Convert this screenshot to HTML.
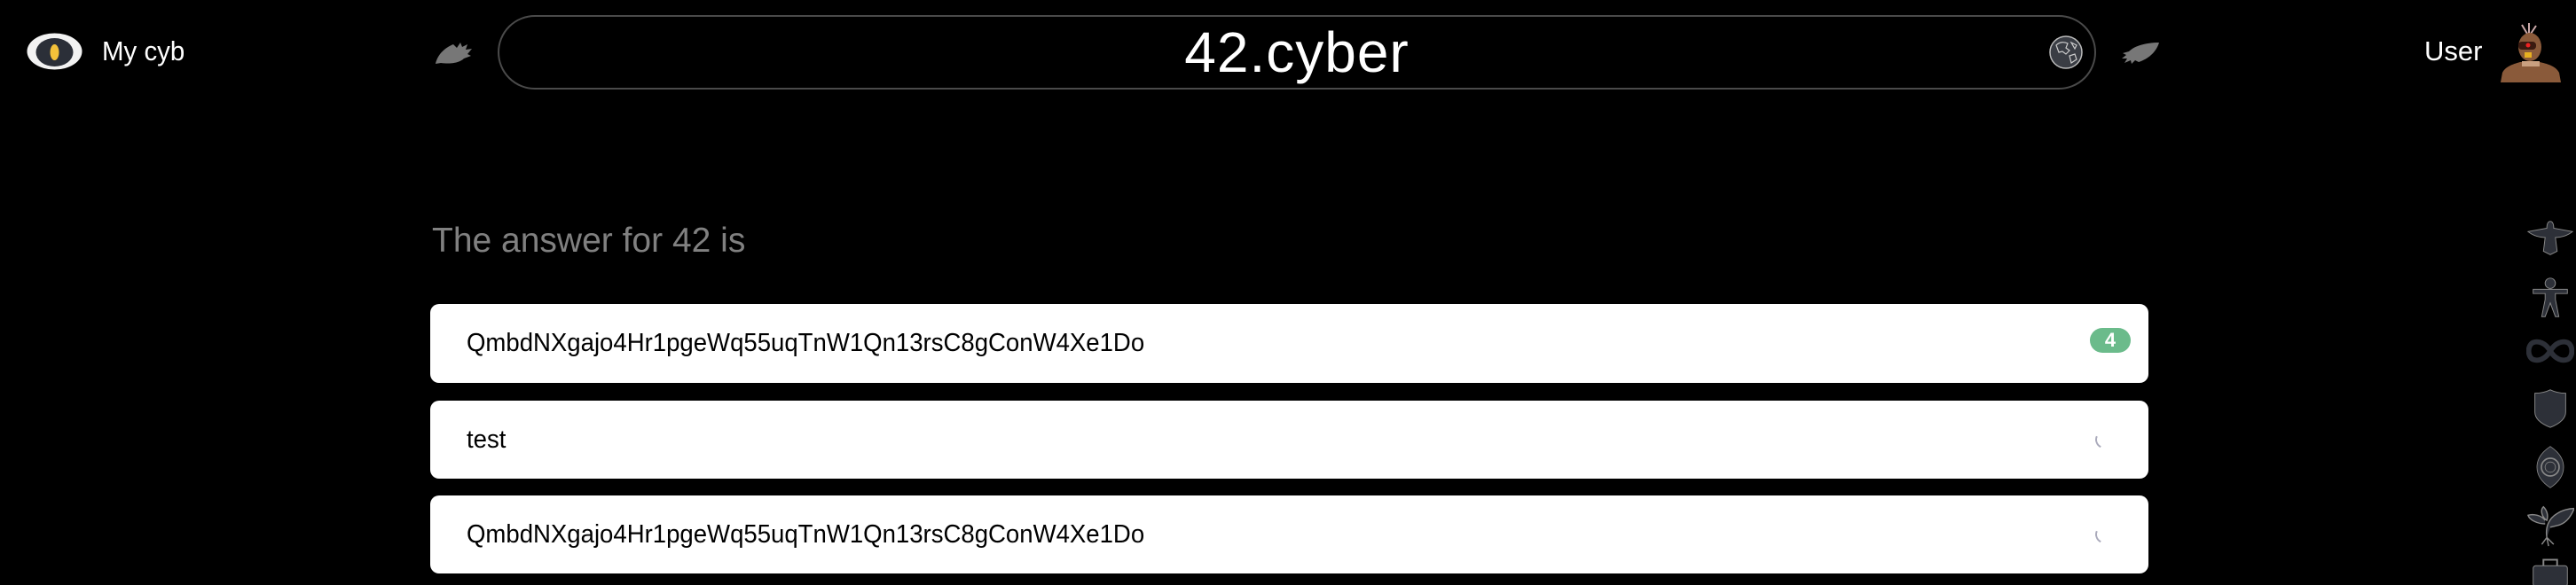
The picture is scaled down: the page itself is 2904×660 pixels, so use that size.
<!DOCTYPE html>
<html><head><meta charset="utf-8"><style>
*{margin:0;padding:0;box-sizing:border-box}
body{width:2904px;height:658px;background:#000;position:relative;overflow:hidden;font-family:"Liberation Sans",sans-serif;color:#fff}
.abs{position:absolute}
.card{position:absolute;left:485px;width:1937px;background:#fff;border-radius:10px;color:#000;font-size:29px;padding-left:41px;display:flex;align-items:center}
.cx{display:inline-block;transform:scaleX(0.95);transform-origin:left center}
.spin{position:absolute;right:40px;top:50%;margin-top:-10px;width:20px;height:20px;border-radius:50%;border-left:2px solid #aab;border-top:2px solid transparent;border-right:2px solid transparent;border-bottom:2px solid transparent;transform:rotate(-20deg)}
.side svg{position:absolute;left:2848px}
</style></head><body>
<svg class="abs" style="left:30px;top:37px" width="63" height="42" viewBox="0 0 63 42"><ellipse cx="31.5" cy="21" rx="31" ry="20.5" fill="#f2f2f2"/><ellipse cx="31.5" cy="22" rx="21" ry="16" fill="#2b2f38"/><ellipse cx="31.5" cy="22" rx="5" ry="9" fill="#f3c13a"/></svg>
<div class="abs" style="left:115px;top:38px;font-size:31px;line-height:40px"><span class="cx">My cyb</span></div>
<svg class="abs" style="left:489px;top:46px" width="45" height="28" viewBox="0 0 45 28"><path d="M2 26 C4 16 12 8 22 4 L26 8 L30 2 L32 7 L38 4 L36 10 L43 9 L38 15 L42 17 L34 20 C28 26 16 26 8 25 Z" fill="#777"/></svg>
<div class="abs" style="left:561px;top:17px;width:1802px;height:84px;border:2px solid #4a4a4a;border-radius:42px"></div>
<div class="abs" style="left:561px;top:17px;width:1802px;height:84px;text-align:center;font-size:64px;line-height:84px;letter-spacing:1px">42.cyber</div>
<svg class="abs" style="left:2309px;top:39px" width="40" height="40" viewBox="0 0 40 40"><circle cx="20" cy="20" r="18" fill="#3a3d44" stroke="#bbb" stroke-width="1.5"/><path d="M9 12 C13 8 18 8 22 10 L20 15 L24 18 L20 22 L16 19 L12 20 Z M24 24 L30 22 L32 28 L26 32 Z M26 9 L32 12 L30 16 Z" fill="none" stroke="#ccc" stroke-width="1.2"/></svg>
<svg class="abs" style="left:2391px;top:46px" width="45" height="28" viewBox="0 0 45 28"><path d="M43 2 C40 12 32 20 20 24 L16 22 L12 26 L11 22 L4 25 L7 20 L1 20 L6 16 L2 14 L9 12 C16 5 30 2 43 2 Z" fill="#777"/></svg>
<div class="abs" style="left:2733px;top:38px;font-size:31px;line-height:40px">User</div>
<svg class="abs" style="left:2819px;top:26px" width="68" height="67" viewBox="0 0 68 67"><path d="M30 12 L24 2 M32 12 L32 0 M34 12 L40 3" stroke="#caa" stroke-width="2"/><ellipse cx="33" cy="27" rx="13" ry="16" fill="#8a5a3a"/><rect x="20" y="21" width="20" height="9" rx="4" fill="#3a1a10"/><circle cx="31" cy="25" r="2.5" fill="#e22"/><rect x="27" y="33" width="8" height="6" fill="#e8b020"/><path d="M0 67 L2 56 C6 48 16 46 22 44 L44 44 C52 46 62 48 66 56 L68 67 Z" fill="#8a5a3a"/><rect x="24" y="43" width="20" height="6" fill="#caa080"/></svg>
<div class="abs" style="left:487px;top:249px;font-size:39px;line-height:46px;color:#808080">The answer for 42 is</div>
<div class="card" style="top:343px;height:89px"><span class="cx">QmbdNXgajo4Hr1pgeWq55uqTnW1Qn13rsC8gConW4Xe1Do</span><div class="abs" style="left:1871px;top:27px;width:46px;height:28px;border-radius:14px;background:#6bbb8b;color:#fff;font-weight:bold;font-size:22px;text-align:center;line-height:28px">4</div></div>
<div class="card" style="top:452px;height:88px"><span class="cx">test</span><div class="spin"></div></div>
<div class="card" style="top:559px;height:88px"><span class="cx">QmbdNXgajo4Hr1pgeWq55uqTnW1Qn13rsC8gConW4Xe1Do</span><div class="spin"></div></div>
<div class="side">
<svg style="top:246px" width="54" height="46" viewBox="0 0 56 42"><path d="M28 1 C31 1 32 5 32 9 L54 13 C48 18 40 20 34 20 L36 36 L28 40 L20 36 L22 20 C16 20 8 18 2 13 L24 9 C24 5 25 1 28 1 Z" fill="#2d3038" stroke="#888" stroke-width="1"/></svg>
<svg style="top:310px" width="54" height="52" viewBox="0 0 56 48"><circle cx="28" cy="7" r="6" fill="#2d3038" stroke="#888"/><path d="M8 14 L48 14 L48 19 L34 19 L34 26 L38 46 L34 46 L28 30 L22 46 L18 46 L22 26 L22 19 L8 19 Z" fill="#2d3038" stroke="#888"/></svg>
<svg style="top:380px" width="54" height="32" viewBox="0 0 56 30"><path d="M28 15 C22 5 14 3 8 5 C1 8 1 22 8 25 C14 27 22 25 28 15 C34 5 42 3 48 5 C55 8 55 22 48 25 C42 27 34 25 28 15 Z" fill="none" stroke="#2d3038" stroke-width="6"/></svg>
<svg style="top:437px" width="54" height="48" viewBox="0 0 56 44"><path d="M10 4 C18 4 24 2 28 0 C32 2 38 4 46 4 L46 26 C46 34 38 40 28 44 C18 40 10 34 10 26 Z" fill="#2d3038" stroke="#888"/></svg>
<svg style="top:502px" width="54" height="50" viewBox="0 0 56 60"><path d="M28 2 C40 10 46 20 46 30 C46 40 40 50 28 58 C16 50 10 40 10 30 C10 20 16 10 28 2 Z" fill="#2d3038" stroke="#888"/><circle cx="28" cy="30" r="12" fill="none" stroke="#888" stroke-width="2"/><circle cx="28" cy="30" r="7" fill="#2d3038" stroke="#888"/></svg>
<svg style="top:564px" width="54" height="54" viewBox="0 0 56 52"><path d="M24 42 C22 30 26 20 36 14 C42 10 50 8 56 8 C52 18 46 26 36 28 L28 30 M22 26 C14 26 4 22 2 16 C8 14 18 16 22 22 M20 6 C24 10 26 16 24 22 C18 18 16 10 20 6 Z M24 42 L18 50 M24 42 L32 50 M24 42 L26 52" fill="#2d3038" stroke="#888" stroke-width="1.5"/></svg>
<svg style="top:630px" width="54" height="30" viewBox="0 0 56 30"><rect x="20" y="1" width="16" height="8" fill="none" stroke="#888" stroke-width="2"/><rect x="8" y="8" width="40" height="24" rx="3" fill="#2d3038" stroke="#888"/></svg>
</div>
</body></html>
